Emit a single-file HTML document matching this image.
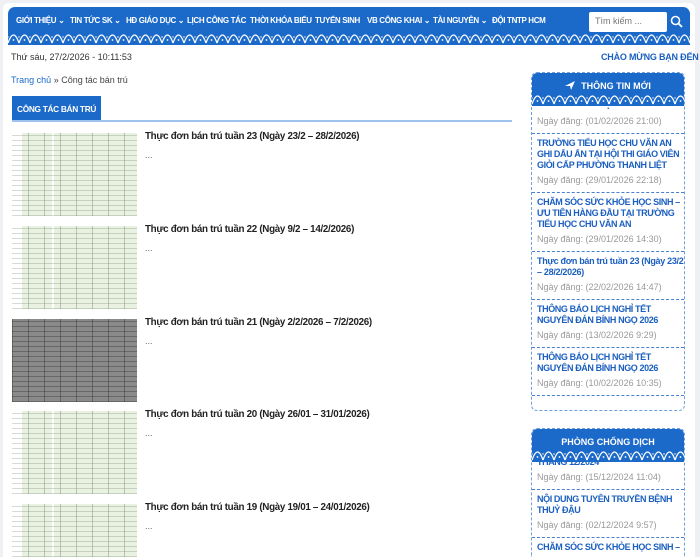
<!DOCTYPE html>
<html style="height:557px;overflow:hidden"><head><meta charset="utf-8">
<style>
*{box-sizing:border-box;margin:0;padding:0}
body{width:700px;height:557px;overflow:hidden;background:#eef0f3;font-family:"Liberation Sans","Noto Sans CJK SC",sans-serif;position:relative}
.page{position:absolute;left:3px;top:3px;width:692px;height:554px;background:#fff;border-radius:6px 6px 0 0}
.nav{position:absolute;left:8px;top:7px;width:682px;height:38px;background:#1b69c9;border-radius:7px 7px 0 0;overflow:hidden}
.nav span{position:absolute;top:9px;color:#fff;font-size:8px;font-weight:bold;white-space:nowrap;letter-spacing:-0.35px}
.wave{position:absolute;left:0;bottom:0;width:100%;height:11px}
.search{position:absolute;left:581px;top:5px;width:78px;height:20px;background:#fff;border-radius:2px;font-size:9px;color:#777;padding:4px 6px}
.abs{position:absolute;white-space:nowrap}
.thumb{position:absolute;left:12px;width:125px;height:83px;background-color:#e9f2e0;
background-image:repeating-linear-gradient(0deg,rgba(90,110,90,.25) 0 1px,transparent 1px 5px),linear-gradient(90deg,#fff 0 10px,transparent 10px 40px,#fff 40px 42px,transparent 42px),repeating-linear-gradient(90deg,rgba(90,110,90,.35) 0 1px,transparent 1px 16px);}
.thumb.gray{background-color:#8a8a8a;background-image:repeating-linear-gradient(0deg,rgba(40,40,40,.35) 0 1px,transparent 1px 5px),repeating-linear-gradient(90deg,rgba(40,40,40,.4) 0 1px,transparent 1px 16px)}
.ttl{position:absolute;left:145px;font-size:9.8px;font-weight:bold;color:#222;white-space:nowrap;letter-spacing:-0.3px}
.dots{position:absolute;left:145px;font-size:9px;color:#666}
.box{position:absolute;left:531px;width:154px;border:1px dashed #6f9ee0;border-radius:6px;overflow:hidden;background:#fff}
.bh{height:33px;background:#1b69c9;position:relative;color:#fff;font-size:9px;font-weight:bold;text-align:center;padding-top:8px}
.it{padding:4px 5px 6px 5px;border-bottom:1px dashed #4a7fce}
.it .t{font-size:9px;line-height:11px;color:#1b5fc0;font-weight:bold;text-transform:uppercase;letter-spacing:-0.4px;white-space:nowrap}
.it .t.n{text-transform:none;letter-spacing:-0.3px}
.it .d{font-size:9px;line-height:12px;color:#999;margin-top:3px;white-space:nowrap}
</style></head><body>
<div class="page"></div>
<svg width="0" height="0" style="position:absolute"><defs>
<pattern id="wv" width="11" height="11" patternUnits="userSpaceOnUse">
<path d="M0 9 Q2.75 1 5.5 1 Q8.25 1 11 9" fill="none" stroke="#fff" stroke-width="1.3"/>
<circle cx="5.5" cy="6" r="0.9" fill="#fff"/><circle cx="0" cy="3" r="0.7" fill="#fff"/><circle cx="11" cy="3" r="0.7" fill="#fff"/>
</pattern></defs></svg>
<div class="nav">
<span style="left:8px">GIỚI THIỆU ⌄</span>
<span style="left:62px">TIN TỨC SK ⌄</span>
<span style="left:118px">HĐ GIÁO DỤC ⌄</span>
<span style="left:179px">LỊCH CÔNG TÁC</span>
<span style="left:242px">THỜI KHÓA BIỂU</span>
<span style="left:307px">TUYỂN SINH</span>
<span style="left:359px">VB CÔNG KHAI ⌄</span>
<span style="left:425px">TÀI NGUYÊN ⌄</span>
<span style="left:484px">ĐỘI TNTP HCM</span>
<div class="search">Tìm kiếm ...</div>
<svg style="position:absolute;left:662px;top:8px" width="13" height="13" viewBox="0 0 13 13"><circle cx="5.5" cy="5.5" r="4" fill="none" stroke="#fff" stroke-width="1.6"/><path d="M8.5 8.5 L12 12" stroke="#fff" stroke-width="1.8"/></svg>
<svg class="wave"><rect width="100%" height="11" fill="url(#wv)"/></svg>
</div>
<div class="abs" style="left:11px;top:52px;font-size:9px;color:#333">Thứ sáu, 27/2/2026 - 10:11:53</div>
<div class="abs" style="left:601px;top:52px;font-size:9px;color:#1b5fc0;font-weight:bold;letter-spacing:-0.2px">CHÀO MỪNG BẠN ĐẾN</div>
<div class="abs" style="left:11px;top:75px;font-size:9px;color:#444"><span style="color:#1b6ac9">Trang chủ</span> » Công tác bán trú</div>
<div class="abs" style="left:12px;top:96px;width:89px;height:25px;background:#1b69c9;color:#fff;font-size:8.3px;font-weight:bold;padding:8px 0 0 5px;letter-spacing:-0.3px">CÔNG TÁC BÁN TRÚ</div>
<div class="abs" style="left:12px;top:120px;width:500px;height:2px;background:#9fc3ec"></div>

<div class="thumb" style="top:133px"></div>
<div class="ttl" style="top:131px">Thực đơn bán trú tuần 23 (Ngày 23/2 – 28/2/2026)</div><div class="dots" style="top:150px">...</div>
<div class="thumb" style="top:226px"></div>
<div class="ttl" style="top:224px">Thực đơn bán trú tuần 22 (Ngày 9/2 – 14/2/2026)</div><div class="dots" style="top:243px">...</div>
<div class="thumb gray" style="top:319px"></div>
<div class="ttl" style="top:317px">Thực đơn bán trú tuần 21 (Ngày 2/2/2026 – 7/2/2026)</div><div class="dots" style="top:336px">...</div>
<div class="thumb" style="top:411px"></div>
<div class="ttl" style="top:409px">Thực đơn bán trú tuần 20 (Ngày 26/01 – 31/01/2026)</div><div class="dots" style="top:428px">...</div>
<div class="thumb" style="top:504px;height:53px"></div>
<div class="ttl" style="top:502px">Thực đơn bán trú tuần 19 (Ngày 19/01 – 24/01/2026)</div><div class="dots" style="top:521px">...</div>

<div class="box" style="top:72px;height:339px">
<div class="bh"><svg width="10" height="9" viewBox="0 0 10 9" style="vertical-align:-1px;margin-right:6px"><path d="M0 5 L10 0 L6 9 L5 5 Z" fill="#fff"/></svg>THÔNG TIN MỚI<svg class="wave"><rect width="100%" height="11" fill="url(#wv)"/></svg></div>
<div class="it" style="padding-top:0;margin-top:-5px"><div class="t" style="text-align:center">.</div><div class="d">Ngày đăng: (01/02/2026 21:00)</div></div>
<div class="it"><div class="t">Trường Tiểu học Chu Văn An<br>ghi dấu ấn tại Hội thi giáo viên<br>giỏi cấp phường Thanh Liệt</div><div class="d">Ngày đăng: (29/01/2026 22:18)</div></div>
<div class="it"><div class="t">Chăm sóc sức khỏe học sinh –<br>ưu tiên hàng đầu tại Trường<br>Tiểu học Chu Văn An</div><div class="d">Ngày đăng: (29/01/2026 14:30)</div></div>
<div class="it"><div class="t n">Thực đơn bán trú tuần 23 (Ngày 23/2<br>– 28/2/2026)</div><div class="d">Ngày đăng: (22/02/2026 14:47)</div></div>
<div class="it"><div class="t">Thông báo lịch nghỉ Tết<br>Nguyên đán Bính Ngọ 2026</div><div class="d">Ngày đăng: (13/02/2026 9:29)</div></div>
<div class="it"><div class="t">Thông báo lịch nghỉ Tết<br>Nguyên đán Bính Ngọ 2026</div><div class="d">Ngày đăng: (10/02/2026 10:35)</div></div>
</div>

<div class="box" style="top:428px;height:129px;border-bottom:none;border-radius:6px 6px 0 0">
<div class="bh">PHÒNG CHỐNG DỊCH<svg class="wave"><rect width="100%" height="11" fill="url(#wv)"/></svg></div>
<div class="it" style="margin-top:-9px"><div class="t">Tháng 12/2024</div><div class="d">Ngày đăng: (15/12/2024 11:04)</div></div>
<div class="it"><div class="t">Nội dung tuyên truyền bệnh<br>thuỷ đậu</div><div class="d">Ngày đăng: (02/12/2024 9:57)</div></div>
<div class="it"><div class="t">Chăm sóc sức khỏe học sinh –</div></div>
</div>
</body></html>
